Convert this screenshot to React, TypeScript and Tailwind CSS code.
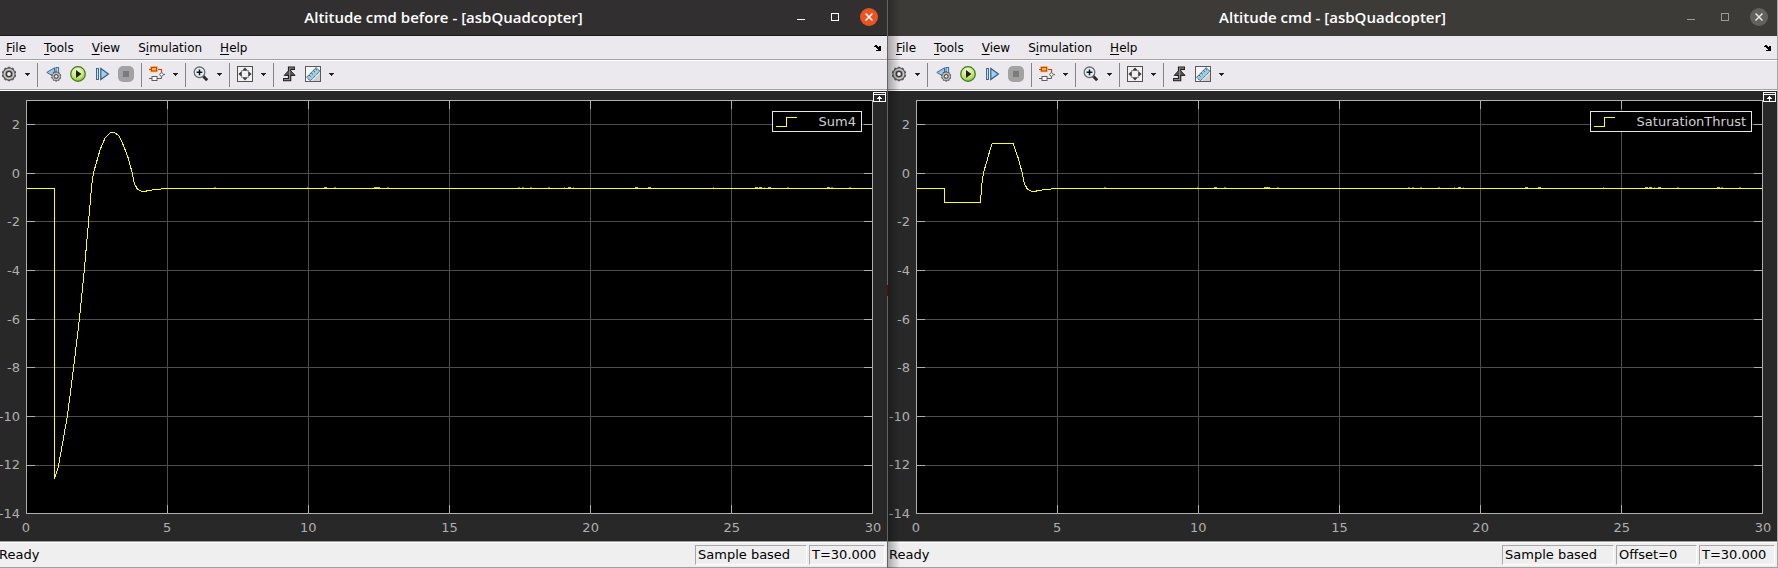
import { useId, type ReactNode } from "react";

type Series = { name: string; path: string };
type ScopeProps = {
  title: string;
  active: boolean;
  series: Series;
  status: { text: string; width: string }[];
};

const xTicks = [0, 5, 10, 15, 20, 25, 30];
const yTicks = [2, 0, -2, -4, -6, -8, -10, -12, -14];
const menus = ["File", "Tools", "View", "Simulation", "Help"];

const gridX = [141.5, 282.5, 423.5, 564.5, 705.5];
const gridY = [24.5, 73.5, 121.5, 170.5, 219.5, 267.5, 316.5, 365.5];

// Small ripple samples one step above the settled value: [x, width, bright]
const ripple: [number, number, boolean][] = [
  [188, 2, false], [281, 1, false], [298, 3, true], [308, 2, false], [348, 6, true],
  [361, 2, false], [492, 2, false], [496, 2, false], [504, 2, false], [522, 2, false],
  [538, 1, false], [542, 3, true], [547, 1, false], [609, 3, true], [622, 3, true],
  [687, 1, false], [729, 3, true], [733, 3, true], [738, 1, false], [742, 3, true],
  [761, 2, false], [801, 3, true], [805, 2, false], [823, 2, false],
];

const tail =
  "L106.3 73.3L108.3 83.3L111.3 89L115.7 91.5L119 91.5L122 90.5L130 89.5L141 88.5H846";

const sum4: Series = {
  name: "Sum4",
  path:
    "M0.5 88.5H28.5V379L32.3 366.7L35.7 348L41.3 316.7L47.3 270L53.3 220L58.3 170L62.7 120L64.7 96.7L65.7 85L67.7 72L70.7 61.7L74 50L79 38.3L84 32.9L86.5 32.5L89 32.9L93 35.7L98 46.7L102.3 58.3" +
    tail,
};

const saturation: Series = {
  name: "SaturationThrust",
  path:
    "M0.5 88.5H28.5V102.5H64.5L65.7 85L67.7 72L70.7 61.7L74 50L76.3 43.5H97L102.3 58.3" + tail,
};

function Svg({ children }: { children: ReactNode }) {
  return (
    <svg viewBox="0 0 16 16" className="size-4" fill="none" aria-hidden="true">
      {children}
    </svg>
  );
}

const gearTeeth = [0, 36, 72, 108, 144, 180, 216, 252, 288, 324];

function Gear() {
  return (
    <g>
      {gearTeeth.map((a) => (
        <rect key={a} x="6.6" y="0.8" width="2.8" height="3" rx="0.8" fill="#555" transform={`rotate(${a} 8 8)`} />
      ))}
      <circle cx="8" cy="8" r="6" fill="#c9c9c9" stroke="#5f5f5f" strokeWidth="1.1" />
      <circle cx="8" cy="8" r="4" fill="#9c9c9c" />
      <circle cx="8" cy="8" r="2.6" fill="#f1f0f3" stroke="#383838" strokeWidth="1.4" />
    </g>
  );
}

function GearIcon() {
  return (
    <Svg>
      <Gear />
    </Svg>
  );
}

function StepBackIcon() {
  return (
    <Svg>
      <path d="M8.5 1.8V11L0.8 6.4Z" fill="#9fc6e6" stroke="#3b6c97" />
      <rect x="10" y="1.5" width="2.6" height="6" fill="#bcd8ee" stroke="#3b6c97" />
      <g transform="translate(4.6 4.8) scale(0.7)">
        <Gear />
      </g>
    </Svg>
  );
}

function RunIcon() {
  const id = useId();
  return (
    <Svg>
      <defs>
        <radialGradient id={id} cx="0.45" cy="0.3" r="0.75">
          <stop offset="0" stopColor="#f4fbdc" />
          <stop offset="0.6" stopColor="#c6e67a" />
          <stop offset="1" stopColor="#6fb324" />
        </radialGradient>
      </defs>
      <circle cx="8" cy="8" r="7.3" fill={`url(#${id})`} stroke="#3e7a1c" strokeWidth="1.2" />
      <path d="M6 4V12L11.4 8Z" fill="#1e1e1e" />
    </Svg>
  );
}

function StepForwardIcon() {
  return (
    <Svg>
      <rect x="2.5" y="2.5" width="2" height="11" fill="#c6def0" stroke="#3b6c97" />
      <path d="M6.8 2.4V13.6L14.4 8Z" fill="#a9cdea" stroke="#2f5f8a" strokeWidth="1.2" />
    </Svg>
  );
}

function StopIcon() {
  return (
    <Svg>
      <rect x="0" y="0" width="16" height="16" rx="5" fill="#a2a2a2" />
      <rect x="5" y="5" width="6" height="6" fill="#7b7b7b" />
    </Svg>
  );
}

function HighlightBlockIcon() {
  return (
    <Svg>
      <rect x="0.8" y="0" width="8.4" height="6.4" rx="1" fill="#f8cf7c" />
      <path d="M0 3.5H2M9 3.5H12.5V6" stroke="#c4450f" strokeWidth="1.2" />
      <rect x="2.4" y="1.4" width="5.2" height="3.6" fill="#ffb04c" stroke="#c4450f" strokeWidth="1.2" />
      <path d="M14.5 8.5H16M10.5 8.5L12.5 6.2L14.7 8.5L12.5 10.8ZM12.5 10.8V12.5H8M0 12.5H3" stroke="#5c5c5c" />
      <rect x="3" y="10.5" width="5" height="4" fill="#fff" stroke="#5c5c5c" />
    </Svg>
  );
}

function ZoomInIcon() {
  return (
    <Svg>
      <path d="M9.8 9.8L14.2 14.2" stroke="#2c2c2c" strokeWidth="3" />
      <circle cx="6.5" cy="6.3" r="5.3" fill="#e3f1fa" stroke="#6c6c6c" strokeWidth="1.3" />
      <path d="M6.5 3.4V9.2M3.6 6.3H9.4" stroke="#111" strokeWidth="1.5" />
    </Svg>
  );
}

function FitIcon() {
  return (
    <Svg>
      <rect x="0.5" y="0.5" width="15" height="15" fill="#f1f1f1" stroke="#505050" />
      <path
        d="M8 1.4L11 4.8H5ZM8 14.6L11 11.2H5ZM1.4 8L4.8 5V11ZM14.6 8L11.2 5V11Z"
        fill="#3c3c3c"
      />
      <path d="M4.2 4.2L5.4 5.4M11.8 4.2L10.6 5.4M4.2 11.8L5.4 10.6M11.8 11.8L10.6 10.6" stroke="#9a9a9a" />
    </Svg>
  );
}

function TriggerIcon() {
  return (
    <Svg>
      <path d="M14 2.2H8.6V13.6H2" stroke="#1f1f1f" strokeWidth="3.4" />
      <path d="M8.6 3.6L14 9.4H3.2Z" fill="#555" stroke="#1f1f1f" />
      <path d="M13.2 2.2H8.6V13.6H2.8" stroke="#8a8a8a" strokeWidth="1.2" />
    </Svg>
  );
}

function RulerIcon() {
  return (
    <Svg>
      <rect x="0.5" y="0.5" width="15" height="15" fill="#f6f6f6" stroke="#5a5a5a" />
      <path d="M15 7V15H7Z" fill="#d0d0d0" />
      <path d="M1.6 11.2L11.2 1.6L14.9 5.3L5.3 14.9Z" fill="#9fcde6" stroke="#274c66" strokeDasharray="1.5 0.6" />
      <path d="M4 9L5.6 10.6M6.2 6.8L7.8 8.4M8.4 4.6L10 6.2M10.4 2.6L12 4.2" stroke="#274c66" strokeWidth="0.9" />
    </Svg>
  );
}

function ToolButton({ label, children }: { label: string; children: ReactNode }) {
  return (
    <button type="button" aria-label={label} className="flex h-6 w-6 shrink-0 items-center justify-center pb-[2px]">
      {children}
    </button>
  );
}

function MoreButton({ label }: { label: string }) {
  return (
    <button
      type="button"
      aria-label={label}
      className="flex h-6 w-[14px] shrink-0 items-center justify-center pb-px pr-px"
    >
      <svg width="5" height="3" viewBox="0 0 5 3" shapeRendering="crispEdges" aria-hidden="true">
        <path d="M0 0H5V1H4V2H3V3H2V2H1V1H0Z" fill="#222" />
      </svg>
    </button>
  );
}

function Separator() {
  return <span className="ml-[2px] mr-[3px] h-6 w-px shrink-0 bg-[#858588]" />;
}

function TitleBar({ title, active }: { title: string; active: boolean }) {
  const tone = active ? "text-white" : "text-[#9b9a98]";
  return (
    <header
      className={`grid h-9 grid-cols-[1fr_auto_1fr] items-center border-b pb-px ${
        active ? "border-[#1b1a1b] bg-[#322f30]" : "border-[#3a3936] bg-[#3d3b38]"
      }`}
    >
      <span />
      <h1 className="whitespace-nowrap pb-px font-['Open_Sans','Noto_Sans',sans-serif] text-[15px] font-semibold leading-5 text-white">
        {title}
      </h1>
      <div className={`flex items-center justify-end gap-[10px] pr-[6px] ${tone}`}>
        <button type="button" aria-label="Minimize" className="flex size-6 items-center justify-center">
          <svg width="10" height="10" viewBox="0 0 10 10" shapeRendering="crispEdges" aria-hidden="true">
            <path d="M1 7.5H9" stroke="currentColor" />
          </svg>
        </button>
        <button type="button" aria-label="Maximize" className="flex size-6 items-center justify-center">
          <svg width="8" height="8" viewBox="0 0 8 8" fill="none" shapeRendering="crispEdges" aria-hidden="true">
            <rect x="0.5" y="0.5" width="7" height="7" stroke="currentColor" />
          </svg>
        </button>
        <button type="button" aria-label="Close" className="flex size-6 items-center justify-center">
          <span
            className={`flex size-[18px] items-center justify-center rounded-full ${
              active ? "bg-[#e95420]" : "bg-[#62615f]"
            }`}
          >
            <svg width="8" height="8" viewBox="0 0 8 8" aria-hidden="true">
              <path d="M0.5 0.5L7.5 7.5M7.5 0.5L0.5 7.5" stroke={active ? "#fff" : "#e6e6e6"} strokeWidth="1.5" />
            </svg>
          </span>
        </button>
      </div>
    </header>
  );
}

function Plot({ series }: { series: Series }) {
  return (
    <div className="relative min-h-0 flex-1">
      <svg
        viewBox="0 0 847 414"
        preserveAspectRatio="none"
        className="absolute inset-0 size-full"
        fill="none"
        shapeRendering="crispEdges"
        role="img"
        aria-label={series.name}
      >
        <rect width="847" height="414" fill="#000" />
        {gridX.map((x) => (
          <g key={x}>
            <path d={`M${x} 1V413`} stroke="#4d4d4d" />
            <path d={`M${x} 1V9M${x} 405V413`} stroke="#afafaf" />
          </g>
        ))}
        {gridY.map((y) => (
          <g key={y}>
            <path d={`M1 ${y}H846`} stroke="#4d4d4d" />
            <path d={`M1 ${y}H9M838 ${y}H846`} stroke="#afafaf" />
          </g>
        ))}
        <rect x="0.5" y="0.5" width="846" height="413" stroke="#afafaf" />
        <path d={series.path} stroke="#ffff11" />
        {ripple.map(([x, w, bright]) => (
          <rect key={x} x={x} y="87" width={w} height="1" fill={bright ? "#d4d40e" : "#7f7f08"} />
        ))}
      </svg>
      <div className="absolute right-[11px] top-[11px] flex h-[21px] items-center gap-[22px] border border-[#e6e6e6] bg-black pl-[3px] pr-[5px]">
        <svg width="21" height="11" viewBox="0 0 21 11" fill="none" shapeRendering="crispEdges" aria-hidden="true">
          <path d="M0 10.5H10.5V1.5H21" stroke="#ffff11" />
        </svg>
        <span className="text-[13px] leading-4 text-[#d0d0d0]">{series.name}</span>
      </div>
    </div>
  );
}

function Scope({ title, active, series, status }: ScopeProps) {
  const inset = active ? "pl-0" : "pl-[2px]";
  return (
    <section
      className={`relative flex min-w-0 flex-col overflow-hidden border-r ${
        active ? "border-[#636363]" : "border-[#a5a5a5]"
      }`}
    >
      <TitleBar title={title} active={active} />
      <nav className={`border-b border-[#a3a3a6] bg-[#ebe9ed] ${inset}`}>
        <div className="flex h-[23px] items-center justify-between pl-[6px] pr-[6px]">
          <div className="flex gap-[18px] text-xs leading-4 text-black">
            {menus.map((m) => {
              const at = m === "Simulation" ? 1 : 0;
              return (
                <button type="button" key={m}>
                  {m.slice(0, at)}
                  <span className="underline underline-offset-2">{m[at]}</span>
                  {m.slice(at + 1)}
                </button>
              );
            })}
          </div>
          <button type="button" aria-label="Dock window">
            <svg width="7" height="6" viewBox="0 0 7 6" shapeRendering="crispEdges" aria-hidden="true">
              <path d="M0 1H1V0H3V1H4V2H5V1H7V6H2V5H4V4H3V3H2V2H1V2H0Z" fill="#000" />
            </svg>
          </button>
        </div>
      </nav>
      <div className={`border-b border-t border-b-[#a3a3a6] border-t-white bg-[#ebe9ed] ${inset}`}>
        <div className="flex h-7 items-center">
          <div className="-ml-[3px] flex">
            <ToolButton label="Configuration properties"><GearIcon /></ToolButton>
            <MoreButton label="More configuration" />
          </div>
          <Separator />
          <div className="flex px-px">
            <ToolButton label="Step back"><StepBackIcon /></ToolButton>
            <ToolButton label="Run"><RunIcon /></ToolButton>
            <ToolButton label="Step forward"><StepForwardIcon /></ToolButton>
            <ToolButton label="Stop"><StopIcon /></ToolButton>
          </div>
          <Separator />
          <ToolButton label="Highlight block"><HighlightBlockIcon /></ToolButton>
          <MoreButton label="More highlight options" />
          <Separator />
          <ToolButton label="Zoom"><ZoomInIcon /></ToolButton>
          <MoreButton label="More zoom options" />
          <Separator />
          <ToolButton label="Scale axes"><FitIcon /></ToolButton>
          <MoreButton label="More scaling options" />
          <Separator />
          <ToolButton label="Triggers"><TriggerIcon /></ToolButton>
          <ToolButton label="Cursor measurements"><RulerIcon /></ToolButton>
          <MoreButton label="More measurements" />
        </div>
      </div>
      <main className={`flex min-h-[320px] flex-1 flex-col border-t border-white bg-[#282828] ${inset}`}>
        <div className="flex flex-1 pt-[9px] text-[13px] leading-4 text-[#afafaf]">
          <div className="flex w-[26px] shrink-0 flex-col justify-between pr-[6px] pt-[25px]">
            {yTicks.map((t) => (
              <span key={t} className="flex h-0 items-center justify-end whitespace-nowrap">{t}</span>
            ))}
          </div>
          <Plot series={series} />
          <div className="w-[14px] shrink-0">
            <button type="button" aria-label="Maximize axes" className="relative -top-2 block">
              <svg width="13" height="10" viewBox="0 0 13 10" fill="none" shapeRendering="crispEdges" aria-hidden="true">
                <rect x="0.5" y="0.5" width="12" height="9" stroke="#fff" />
                <path d="M1 2.5H12M6.5 4V9M5 5.5H8M4 6.5H9" stroke="#fff" />
              </svg>
            </button>
          </div>
        </div>
        <div className="flex h-[27px] justify-between pl-[26px] pr-[14px] pt-[6px] text-[13px] leading-4 text-[#afafaf]">
          {xTicks.map((t) => (
            <span key={t} className="flex w-0 justify-center">{t}</span>
          ))}
        </div>
      </main>
      <footer className={`border-b border-t border-[#a0a0a0] bg-[#efefef] ${inset}`}>
        <div className="flex h-[25px] items-center gap-[2px] border-t border-white pr-[2px] text-[13px] leading-4 text-black">
          <span className="-ml-px flex-1">Ready</span>
          {status.map((s) => (
            <span
              key={s.text}
              className={`flex h-5 items-center whitespace-nowrap border border-b-white border-l-[#a8a8a8] border-r-white border-t-[#a8a8a8] pl-[2px] ${s.width}`}
            >
              {s.text}
            </span>
          ))}
        </div>
      </footer>
      {!active && (
        <div className="pointer-events-none absolute inset-y-0 left-0 w-3 bg-gradient-to-r from-black/30 to-transparent" />
      )}
    </section>
  );
}

export default function App() {
  return (
    <div className="relative grid min-h-screen grid-cols-[888fr_890fr] bg-[#282828] font-['DejaVu_Sans',sans-serif]">
      <Scope
        title="Altitude cmd before - [asbQuadcopter]"
        active
        series={sum4}
        status={[
          { text: "Sample based", width: "w-28" },
          { text: "T=30.000", width: "w-[76px]" },
        ]}
      />
      <Scope
        title="Altitude cmd - [asbQuadcopter]"
        active={false}
        series={saturation}
        status={[
          { text: "Sample based", width: "w-28" },
          { text: "Offset=0", width: "w-[81px]" },
          { text: "T=30.000", width: "w-[76px]" },
        ]}
      />
      <div className="pointer-events-none absolute inset-0 grid grid-cols-[888fr_890fr]">
        <span className="mt-[285px] h-[11px] w-px justify-self-end bg-[#5a0c0c]" />
      </div>
    </div>
  );
}
